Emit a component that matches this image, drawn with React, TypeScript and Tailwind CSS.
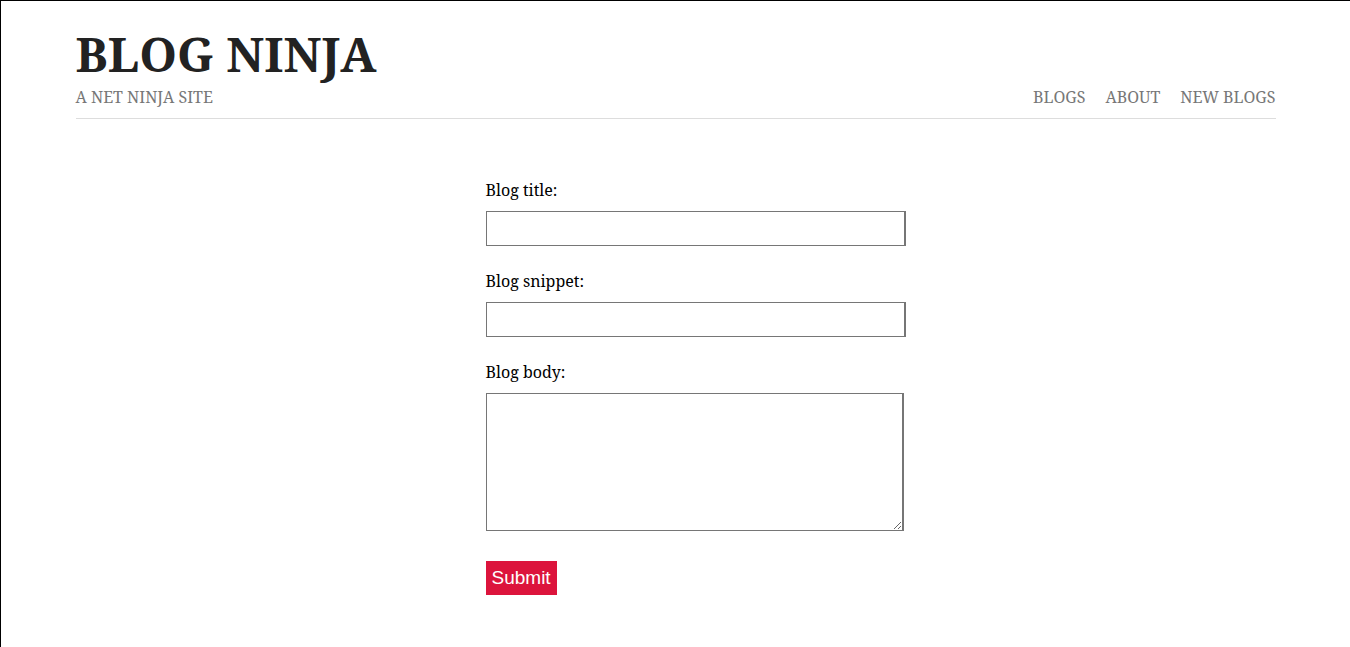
export default function App() {
  const serif = { fontFamily: '"Noto Serif", "DejaVu Serif", serif' }
  return (
    <div className="min-h-[647px] bg-white border-l border-t border-black" style={serif}>
      <div className="max-w-[1200px] mx-auto pt-[20px]">
        <nav className="flex justify-between items-end pb-[10px] border-b border-[#ddd] mb-[60px] uppercase">
          <div>
            <h1 className="text-[48px] font-bold text-[#222] leading-[65px]">Blog Ninja</h1>
            <p className="text-[#777] text-base leading-[22px]">A Net Ninja Site</p>
          </div>
          <ul className="flex items-end -mb-px">
            <li className="ml-5 leading-[20px]"><a className="text-[#777] text-base">Blogs</a></li>
            <li className="ml-5 leading-[20px]"><a className="text-[#777] text-base">About</a></li>
            <li className="ml-5 leading-[20px]"><a className="text-[#777] text-base">New Blogs</a></li>
          </ul>
        </nav>
        <form className="w-[420px] ml-[410px]" onSubmit={(e) => e.preventDefault()}>
          <label className="block text-black text-base leading-[22px]">Blog title:</label>
          <input type="text" className="block w-[420px] h-[35px] mt-[10px] mb-[24px] px-[10px] border border-r-2 border-[#767676]" />
          <label className="block text-black text-base leading-[22px]">Blog snippet:</label>
          <input type="text" className="block w-[420px] h-[35px] mt-[10px] mb-[24px] px-[10px] border border-r-2 border-[#767676]" />
          <label className="block text-black text-base leading-[22px]">Blog body:</label>
          <textarea className="block w-[418px] h-[138px] mt-[10px] mb-[30px] p-[10px] border border-r-2 border-[#767676]" />
          <button
            type="submit"
            className="bg-[#dc143c] text-white text-[19px] leading-[22px] px-[6px] py-[6px]"
            style={{ fontFamily: '"Liberation Sans", Arial, sans-serif' }}
          >
            Submit
          </button>
        </form>
      </div>
    </div>
  )
}
